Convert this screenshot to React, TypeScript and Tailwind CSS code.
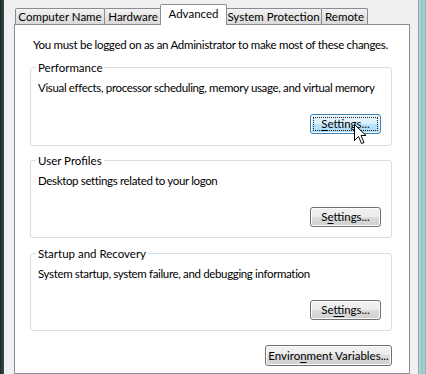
import React from "react";

const font = { fontFamily: 'Lato, "Liberation Sans", Arial, sans-serif' };

// ─── Tabs ─────────────────────────────────────────────────────────────────────

type Tab = { label: string; w: string; ml: string; active?: boolean };

const TABS: Tab[] = [
  { label: "Computer Name", w: "w-[90px]", ml: "ml-[1px]" },
  { label: "Hardware", w: "w-[58px]", ml: "-ml-px" },
  { label: "Advanced", w: "w-[67px]", ml: "-ml-[2px]", active: true },
  { label: "System Protection", w: "w-[97px]", ml: "-ml-[2px]" },
  { label: "Remote", w: "w-[47px]", ml: "-ml-px" },
];

function TabStrip() {
  return (
    <div className="flex h-[20px] items-end">
      {TABS.map((t) =>
        t.active ? (
          <div
            key={t.label}
            className={`${t.w} ${t.ml} relative z-10 -mb-px flex h-[21px] shrink-0 justify-center whitespace-nowrap rounded-t-[2px] border border-b-0 border-[#898c95] bg-white pt-[1px] text-[11.5px] leading-[15px] text-black`}
          >
            {t.label}
          </div>
        ) : (
          <div
            key={t.label}
            className={`${t.w} ${t.ml} flex h-[16px] shrink-0 justify-center whitespace-nowrap rounded-t-[2px] border border-b-0 border-[#898c95] bg-[linear-gradient(to_bottom,#f3f3f3,#e4e4e4_50%,#dadada)] text-[11.5px] leading-[15px] text-black`}
          >
            {t.label}
          </div>
        )
      )}
    </div>
  );
}

// ─── Buttons ──────────────────────────────────────────────────────────────────

function Label({ text, u }: { text: string; u: number }) {
  return (
    <span className="whitespace-nowrap">
      {text.slice(0, u)}
      <span className="underline underline-offset-[2px]">{text[u]}</span>
      {text.slice(u + 1)}
    </span>
  );
}

function VistaButton({
  text,
  u,
  w = "w-[71px]",
  h = "h-[20px]",
  hot,
}: {
  text: string;
  u: number;
  w?: string;
  h?: string;
  hot?: boolean;
}) {
  if (hot) {
    return (
      <div
        className={`${w} ${h} flex shrink-0 items-center justify-center rounded-[3px] border border-[#3c7fb1] bg-[linear-gradient(to_bottom,#eaf6fd_0%,#d9f0fc_50%,#bee6fd_50%,#a7d9f5_100%)] p-[2px] text-[11.5px] leading-[14px] text-black shadow-[inset_0_0_0_1px_#f4fbfe]`}
      >
        <div className="flex h-full w-full items-center justify-center border border-dotted border-[#222]">
          <Label text={text} u={u} />
        </div>
      </div>
    );
  }
  return (
    <div
      className={`${w} ${h} flex shrink-0 items-center justify-center rounded-[3px] border border-[#707070] bg-[linear-gradient(to_bottom,#f2f2f2_0%,#ebebeb_50%,#dddddd_50%,#cfcfcf_100%)] text-[11.5px] leading-[14px] text-black shadow-[inset_0_0_0_1px_#fcfcfc]`}
    >
      <Label text={text} u={u} />
    </div>
  );
}

// ─── Group box ────────────────────────────────────────────────────────────────

function GroupBox({
  title,
  desc,
  h,
  mt,
  pb,
  button,
}: {
  title: string;
  desc: string;
  h: string;
  mt: string;
  pb: string;
  button: React.ReactNode;
}) {
  return (
    <div
      className={`${h} ${mt} ${pb} flex flex-col rounded-[3px] border border-[#d5dfe5] pl-[5px] pr-[10px]`}
    >
      <div className="-mt-[8px] w-fit whitespace-nowrap bg-white px-[2px] text-[11.5px] leading-[15px] text-black">
        {title}
      </div>
      <div className="mt-[5px] whitespace-nowrap pl-[2px] text-[11.5px] leading-[15px] tracking-[-0.35px] text-black">
        {desc}
      </div>
      <div className="mt-auto flex justify-end">{button}</div>
    </div>
  );
}

function Cursor() {
  return (
    <svg
      className="absolute left-[354px] top-[124px] z-20"
      width="13"
      height="21"
      viewBox="0 0 13 21"
    >
      <path
        d="M0.5 0.5 L0.5 16.5 L4.5 12.5 L7.5 19.5 L10 18.5 L7 11.5 L12 11.5 Z"
        fill="#fff"
        stroke="#000"
        strokeWidth="1"
      />
    </svg>
  );
}

// ─── Main ─────────────────────────────────────────────────────────────────────

export default function App() {
  return (
    <div className="relative flex h-[374px] w-[426px] overflow-hidden" style={font}>
      {/* left window frame */}
      <div className="w-[4px] shrink-0 bg-[linear-gradient(to_right,#1d2829,#3a4b4c)]" />

      {/* dialog body */}
      <div className="flex min-w-0 flex-1 flex-col bg-[#f0f0f0] pl-[10px] pr-[8px] pt-[4px]">
        <TabStrip />

        <div className="min-w-0 flex-1 border border-[#898c95] bg-white pl-[15px] pr-[17px] pt-[12px]">
          <div className="whitespace-nowrap pl-[3px] text-[11.5px] leading-[15px] tracking-[-0.3px] text-black">
            You must be logged on as an Administrator to make most of these changes.
          </div>

          <GroupBox
            title="Performance"
            desc="Visual effects, processor scheduling, memory usage, and virtual memory"
            h="h-[79px]"
            mt="mt-[15px]"
            pb="pb-[11px]"
            button={<VistaButton text="Settings..." u={0} hot />}
          />

          <GroupBox
            title="User Profiles"
            desc="Desktop settings related to your logon"
            h="h-[78px]"
            mt="mt-[14px]"
            pb="pb-[10px]"
            button={<VistaButton text="Settings..." u={1} />}
          />

          <GroupBox
            title="Startup and Recovery"
            desc="System startup, system failure, and debugging information"
            h="h-[78px]"
            mt="mt-[15px]"
            pb="pb-[10px]"
            button={<VistaButton text="Settings..." u={2} />}
          />

          <div className="mt-[14px] flex justify-end">
            <VistaButton text="Environment Variables..." u={6} w="w-[127px]" h="h-[21px]" />
          </div>
        </div>
      </div>

      {/* right window frame */}
      <div className="w-[8px] shrink-0 border-l border-[#9aa5a8] bg-[linear-gradient(to_right,#b9dcdc,#8fc3c6_40%,#a9d3d4_70%,#7fb2b5)]" />

      <Cursor />
    </div>
  );
}
